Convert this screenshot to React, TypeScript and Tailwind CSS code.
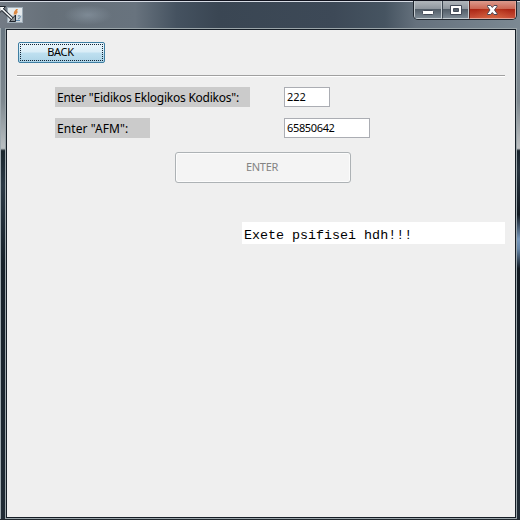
import React from "react";

const uiFont = "font-['Noto_Sans',sans-serif]";

function JavaIcon() {
  return (
    <svg className="absolute left-0 top-[-1px]" width="26" height="27" viewBox="0 0 26 27">
      <rect x="7.5" y="7.5" width="15" height="15" fill="#cfd8df" stroke="#9eacb7" />
      <rect x="8" y="8" width="14" height="7" fill="#e5eaed" />
      <path d="M17 9c0 2-3.500 2.500-2.500 5.500M17.500 11.500c-2 1-1.500 1.500-2 3" fill="none" stroke="#dc8a45" strokeWidth="1.8" />
      <path d="M18 16c3.500-1 3 2 0 3M16 20.500h4" fill="none" stroke="#6288a8" strokeWidth="1" />
      <path d="M2 9l10.500 10" stroke="#252b33" strokeWidth="3.4" />
      <path d="M-.5 6.500h6l-5.500 6z" fill="#f8fafb" stroke="#20262e" strokeWidth="1" />
      <path d="M15.500 15v6.500h-6z" fill="#8b9094" stroke="#20262e" strokeWidth="1" />
      <path d="M2 9l10 9.500" stroke="#f8fafb" strokeWidth="1.5" />
    </svg>
  );
}

function TitleBar() {
  return (
    <header className="relative flex h-7 shrink-0 justify-end border-t border-[#11131e] bg-[linear-gradient(90deg,#737b85_0%,#667079_10%,#68737e_26%,#455260_34%,#3a4653_42%,#3d4957_64%,#465461_74%,#65717d_80%,#7c8993_100%)]">
      <div className="absolute inset-x-0 top-0 h-px bg-[#d6dbe4]" />
      <div className="absolute left-16 top-1 h-5 w-12 bg-[radial-gradient(closest-side,#8996a2aa,transparent)]" />
      <JavaIcon />
      <div className="relative mr-[3px] flex h-[19px] w-[104px] overflow-hidden rounded-b-[5px] border border-t-0 border-[#20262f]">
        <button className="flex w-7 items-center justify-center border border-t-0 border-[#c4cbd0] bg-[linear-gradient(#b1b7bc_0%,#8d959d_47%,#535e69_50%,#7d8994_100%)]">
          <svg width="12" height="14" viewBox="0 0 12 14"><rect x=".5" y="7.5" width="11" height="4" rx="1" fill="#fff" stroke="#444b59" /></svg>
        </button>
        <button className="flex w-[27px] items-center justify-center border border-t-0 border-l-[#3c4651] border-r-[#c4cbd0] border-b-[#c4cbd0] bg-[linear-gradient(#b1b7bc_0%,#8d959d_47%,#535e69_50%,#7d8994_100%)]">
          <svg width="12" height="16" viewBox="0 0 12 16"><path fillRule="evenodd" d="M.5 3.5h11v9H.5zM3.500 6.500h5v3h-5z" fill="#fff" stroke="#444b59" /></svg>
        </button>
        <button className="flex w-[47px] items-center justify-center border border-t-0 border-[#e3a496] border-l-[#5d2019] bg-[radial-gradient(ellipse_at_bottom,#e7854c66,transparent_60%),linear-gradient(#dc9b8d_0%,#cb6653_46%,#ac2715_50%,#c9503a_100%)]">
          <svg width="13" height="16" viewBox="0 0 13 16"><path d="M1.500 3.5h3l1.800 2 1.700-2h3v1L8.500 8l2.500 3.500v1H8l-1.700-2-1.800 2h-3v-1L4 8 1.500 4.500z" fill="#fff" stroke="#4c4855" /></svg>
        </button>
      </div>
    </header>
  );
}

export default function App() {
  return (
    <div className="flex h-[520px] w-[520px] flex-col overflow-hidden bg-[#20272e]">
      <TitleBar />
      <div className="flex h-[491px]">
        <div className="w-[5px] shrink-0 border-l border-[#9faab0] bg-[linear-gradient(#697681_0%,#7e888f_15%,#bac0c3_24.5%,#1a262d_25%,#2b3945_32%,#17212a_48%,#202b35_100%)]" />
        <div className="w-[512px] shrink-0 border border-[#9ba5a9]">
          <main className={`h-full border border-[#151d26] bg-[#efefef] text-black ${uiFont}`}>
            <div className="flex h-[45px] pl-[11px] pt-3">
              <button className="h-[21px] w-[87px] rounded-[2px] border border-[#3f7ea2] bg-[linear-gradient(#eaf5fb_0%,#d9edf7_48%,#bfe0f0_52%,#add4e7_100%)] p-px">
                <span className="flex h-full items-center justify-center border border-dotted border-[#123] pb-[3px] pr-[2px] text-[11px] leading-none tracking-[-0.3px]">BACK</span>
              </button>
            </div>
            <div className="ml-[10px] h-[2px] w-[488px] border-t border-[#a0a0a0] bg-white" />
            <div className="mt-[10px] flex pl-12">
              <label className="h-5 w-[195px] whitespace-nowrap bg-[#cbcbcb] pl-[2px] text-[12px] leading-[22px] tracking-[-0.24px]">Enter "Eidikos Eklogikos Kodikos":</label>
              <div className="ml-[34px] h-5 w-[46px] border border-[#abadb3] bg-white pl-[2px] text-[11px] leading-[18px] tracking-[-0.1px]">222</div>
            </div>
            <div className="mt-[11px] flex pl-12">
              <label className="h-5 w-[95px] whitespace-nowrap bg-[#cbcbcb] pl-[2px] text-[12px] leading-[22px] tracking-[0.1px]">Enter "AFM":</label>
              <div className="ml-[134px] h-5 w-[86px] border border-[#abadb3] bg-white pl-[2px] text-[11px] leading-[18px] tracking-[-0.35px]">65850642</div>
            </div>
            <button disabled className="ml-[168px] mt-[14px] flex h-[31px] w-[176px] items-center justify-center rounded-[3px] border border-[#adb2b5] bg-[#f4f4f4] pb-[3px] pr-[2px] text-[11px] leading-none tracking-[-0.3px] text-[#838383] shadow-[inset_0_0_0_1px_#fcfcfc]">ENTER</button>
            <div className="ml-[235px] mt-[39px] h-[22px] w-[263px] whitespace-pre bg-white pl-[2px] font-['Liberation_Mono',monospace] text-[13.35px] leading-[28px]">Exete psifisei hdh!!!</div>
          </main>
        </div>
        <div className="w-[3px] shrink-0 bg-[linear-gradient(#7c8993_0%,#7e888f_15%,#bdc0c2_24.5%,#17212a_25%,#26323d_29%,#101820_38%,#7899bd_43%,#6686a8_45%,#101820_49%,#202b35_100%)]" />
      </div>
    </div>
  );
}
